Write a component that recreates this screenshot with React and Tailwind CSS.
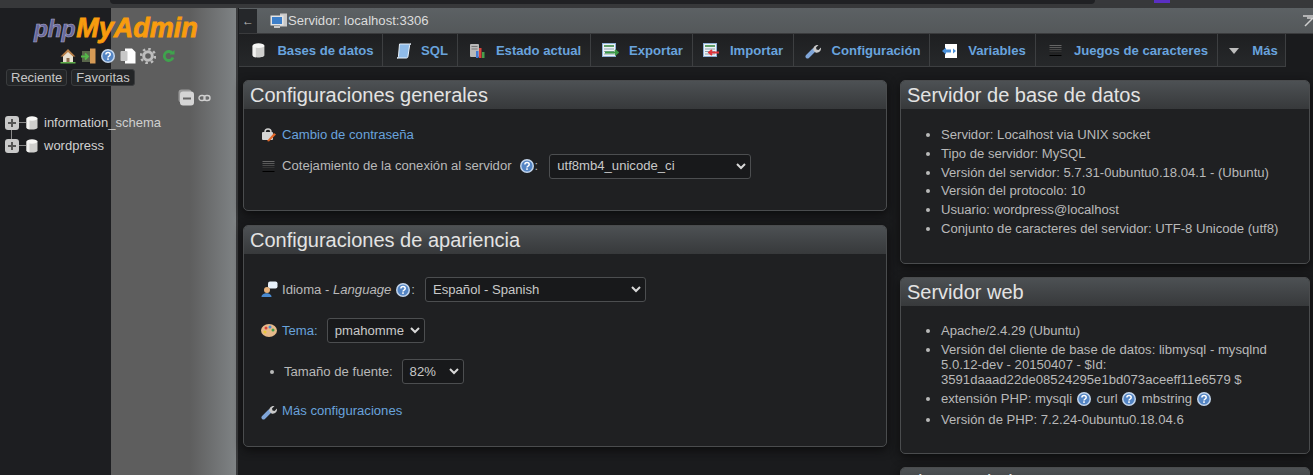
import React from "react";

const Help = ({ className = "" }) => (
  <svg width="14" height="14" viewBox="0 0 14 14" className={`inline-block shrink-0 ${className}`}>
    <circle cx="7" cy="7" r="7" fill="#c4d6ec" />
    <circle cx="7" cy="7" r="5.500" fill="#5485c4" />
    <path d="M4.900 5.600c0-2.700 4.300-2.700 4.300 0 0 1.600-2.200 1.400-2.200 2.800" fill="none" stroke="#fff" strokeWidth="1.500" />
    <rect x="6.200" y="9.300" width="1.600" height="1.600" fill="#fff" />
  </svg>
);

const Db = ({ w = 12, h = 14 }) => (
  <svg width={w} height={h} viewBox="0 0 12 14" className="shrink-0">
    <path d="M0.500 2.500v9c0 2.700 11 2.700 11 0v-9z" fill="#cfcfcd" />
    <path d="M0.500 2.500v9c0 1.200 1.500 1.800 3 2V4z" fill="#f2f2f0" />
    <ellipse cx="6" cy="2.500" rx="5.500" ry="2.200" fill="#f7f7f5" />
  </svg>
);

const Lines = () => (
  <svg width="13" height="13" viewBox="0 0 13 13" className="shrink-0">
    {[1, 3, 5, 7, 9, 11].map((y, i) => (
      <rect key={y} x="0.500" y={y} width="12" height="1" fill={["#666", "#5a5a5a", "#4a4a4a", "#333", "#222", "#000"][i]} />
    ))}
  </svg>
);

const Wrench = () => (
  <svg width="17" height="17" viewBox="0 0 17 17" className="shrink-0">
    <path d="M2.500 14.500 9 8" stroke="#7fa5d8" strokeWidth="4" strokeLinecap="round" />
    <path d="M8.500 8.500c-1-3 1.500-6 5-5.500l-2.500 2.500.5 2 2 .5 2.500-2.500c.5 3.500-2.500 6-5.500 5z" fill="#c9c9c9" />
  </svg>
);

const Sql = () => (
  <svg width="16" height="16" viewBox="0 0 16 16" className="shrink-0">
    <path d="M3.500 1H15c-1 0-1.500 1-1.500 2l-1.500 10c0 1-.5 2-1.500 2H1c1 0 1.500-1 1.500-2z" fill="#8fbbe8" stroke="#eaf3fc" strokeWidth="1" />
  </svg>
);

const Status = () => (
  <svg width="17" height="16" viewBox="0 0 17 16" className="shrink-0">
    <rect x="1" y="1" width="9" height="13" rx="1" fill="#b8b8b8" />
    <path d="M2.500 3.500h6M2.500 6h6" stroke="#777" />
    <rect x="7" y="8" width="2.500" height="7" fill="#3f78d4" />
    <rect x="10" y="5" width="2.500" height="10" fill="#d9423a" />
    <rect x="13" y="9" width="2.500" height="6" fill="#46a04a" />
  </svg>
);

const Sheet = ({ arrow }) => (
  <svg width="17" height="15" viewBox="0 0 17 15" className="shrink-0">
    <rect x="0.500" y="0.500" width="13" height="13" fill="#eef2f6" stroke="#8fb0d8" />
    <rect x="2" y="2" width="10" height="2" fill="#5f9e6a" />
    <path d="M2 6h10M2 8.500h10M2 11h10" stroke="#8aa0b0" />
    <path d={arrow === "in" ? "M16 9.500H6M9 7l-3 2.500L9 12" : "M3 9.500h13M13 7l3 2.500-3 2.500"} fill="none" stroke={arrow === "in" ? "#e2333a" : "#3c9a46"} strokeWidth="1.800" />
  </svg>
);

const Vars = () => (
  <svg width="18" height="16" viewBox="0 0 18 16" className="shrink-0">
    <rect x="4" y="1" width="12" height="14" fill="#fff" />
    <path d="M1 8l4-3.500v2h5v3H5v2z" fill="#4a90d9" />
    <path d="M15 8l-3-2.500v5z" fill="#4a90d9" />
  </svg>
);

const Arrow = () => (
  <svg width="10" height="6" viewBox="0 0 10 6" className="shrink-0">
    <path d="M0 0h10L5 6z" fill="#bdbdbd" />
  </svg>
);

const tabs = [
  { icon: <Db w={13} h={15} />, label: "Bases de datos", w: "w-[144px] pl-[5px]", gap: "gap-[12px]" },
  { icon: <Sql />, label: "SQL", w: "w-[75px] pl-[4px]", gap: "gap-[9px]" },
  { icon: <Status />, label: "Estado actual", w: "w-[133px] pl-[2px]", gap: "gap-[10px]" },
  { icon: <Sheet arrow="out" />, label: "Exportar", w: "w-[102px] pl-[2px]", gap: "gap-[10px]" },
  { icon: <Sheet arrow="in" />, label: "Importar", w: "w-[101px]", gap: "gap-[10px]" },
  { icon: <Wrench />, label: "Configuración", w: "w-[136px] pl-[2px]", gap: "gap-[10px]" },
  { icon: <Vars />, label: "Variables", w: "w-[106px] pl-[2px]", gap: "gap-[9px]" },
  { icon: <Lines />, label: "Juegos de caracteres", w: "w-[182px] pl-[4px]", gap: "gap-[12px]" },
  { icon: <Arrow />, label: "Más", w: "w-[68px] pl-[4px]", gap: "gap-[13px]" },
];

function Panel({ title, className = "", children }) {
  return (
    <section className={`shrink-0 border border-[#4a4c4e] rounded-[5px] bg-[#1f2022] shadow-[0_3px_10px_#0c0c0d] overflow-hidden ${className}`}>
      <h2 className="h-[28px] bg-gradient-to-b from-[#4d5154] to-[#37393b] pl-[6px] text-[20px] leading-[28px] text-[#e3e3e3]">{title}</h2>
      {children}
    </section>
  );
}

const Sel = ({ className, children }) => (
  <div className={`flex items-center justify-between rounded-[3px] border border-[#4c4e50] bg-[#18191b] text-[#c9c9c9] ${className}`}>
    <span>{children}</span>
    <svg width="10" height="7" viewBox="0 0 10 7">
      <path d="M1 1l4 4 4-4" fill="none" stroke="#d8d8d8" strokeWidth="2" />
    </svg>
  </div>
);

export default function App() {
  return (
    <div className="h-screen w-full overflow-hidden flex flex-col bg-[#1a1b1d] font-['Liberation_Sans',sans-serif] text-[13.12px] text-[#b9b9b9]">
      {/* browser strip */}
      <div className="h-[8px] shrink-0 bg-[#37383a] flex">
        <div className="ml-[110px] w-[985px] h-[4px] bg-[#202124] rounded-bl-[8px] rounded-br-[8px]" />
        <div className="ml-[59px] w-[16px] h-[3px] bg-[#5a2fc2]" />
      </div>

      <div className="flex flex-1 min-h-0">
        {/* sidebar */}
        <aside className="w-[236px] shrink-0 bg-[linear-gradient(to_right,#1d1e21_0,#1d1e21_111px,#5e5e5e_111px,#5e5e5e_190px,#7f8385_236px)] text-[#c6c6c6]">
          <div className="mt-[5px] ml-[34px] h-[30px] flex items-baseline font-bold italic leading-[30px]">
            <span className="text-[23px] tracking-[-0.3px] text-[#66669a] [-webkit-text-stroke:0.6px_#a8a8c8]">php</span>
            <span className="ml-[1px] text-[27px] text-[#f89c0e] [-webkit-text-stroke:0.8px_#f89c0e]">MyAdmin</span>
          </div>
          <div className="mt-[5px] ml-[60px] flex items-center gap-[4px] h-[16px]">
            <svg width="16" height="16" viewBox="0 0 16 16"><path d="M3 8v6h10V8L8 3z" fill="#e8e0d0" /><path d="M8 1 0.500 8.500h2.500L8 4l5 4.500h2.500z" fill="#b9814a" /><rect x="6.500" y="10" width="3" height="4" fill="#8a6a4a" /><rect x="0.500" y="14" width="15" height="1.500" fill="#5fae4a" /></svg>
            <svg width="16" height="16" viewBox="0 0 16 16"><rect x="10" y="0.500" width="5.500" height="15" fill="#d59a56" /><rect x="2" y="3" width="8" height="11" fill="#59664a" /><path d="M1 8.500h7M5 5.500 8 8.500l-3 3" stroke="#54b84a" strokeWidth="1.800" fill="none" /></svg>
            <Help className="ml-[1px]" />
            <svg width="16" height="16" viewBox="0 0 16 16" className="ml-[1px]"><path d="M5 0.500h7l3.500 3.500v11.500H5z" fill="#fff" /><rect x="0.500" y="3" width="7" height="10" rx="1" fill="#c8c8c8" /></svg>
            <svg width="16" height="16" viewBox="0 0 16 16"><circle cx="8" cy="8" r="4.300" fill="none" stroke="#bdbdbd" strokeWidth="3" /><circle cx="8" cy="8" r="7" fill="none" stroke="#bdbdbd" strokeWidth="2.500" strokeDasharray="2.500 3" /></svg>
            <svg width="13" height="14" viewBox="0 0 13 14" className="ml-[2px]"><path d="M10.500 4.500A4.500 4.500 0 1 0 11 8.500" fill="none" stroke="#3fa34d" strokeWidth="2.800" /><path d="M7.500 5.500h5V1z" fill="#3fa34d" /></svg>
          </div>
          <div className="mt-[5px] ml-[6px] flex gap-[4px] text-[13px] leading-[15px]">
            <span className="h-[17px] px-[4px] rounded-[3px] border border-[#3a3c3e] bg-[#232527]">Reciente</span>
            <span className="h-[17px] px-[4px] rounded-[3px] border border-[#3a3c3e] bg-[#232527]">Favoritas</span>
          </div>
          <div className="mt-[3px] ml-[178px] h-[17px] flex items-center gap-[4px]">
            <svg width="16" height="17" viewBox="0 0 16 17"><rect x="0.500" y="0.500" width="13" height="13" rx="3" fill="#9a9a9a" /><rect x="2" y="2.500" width="14" height="14" rx="3" fill="#d5d5d5" /><rect x="5" y="8.500" width="8" height="2" fill="#666" /></svg>
            <svg width="13" height="8" viewBox="0 0 13 8"><rect x="1" y="1.500" width="6" height="5" rx="2.500" fill="none" stroke="#cfcfcf" strokeWidth="1.400" /><rect x="6" y="1.500" width="6" height="5" rx="2.500" fill="none" stroke="#cfcfcf" strokeWidth="1.400" /></svg>
          </div>
          <ul className="mt-[5px] ml-[5px] relative">
            {["information_schema", "wordpress"].map((db, i) => (
              <li key={db} className="h-[23px] flex items-center relative">
                {i === 0 && <span className="absolute left-[6px] top-[14px] w-px h-[18px] bg-[#8a8a8a]" />}
                <svg width="14" height="14" viewBox="0 0 14 14" className="shrink-0 relative">
                  <rect width="14" height="14" rx="3" fill="#c9c9c9" />
                  <path d="M3 7h8M7 3v8" stroke="#555" strokeWidth="2" />
                </svg>
                <span className="w-[7px] h-px bg-[#8a8a8a] shrink-0" />
                <Db />
                <span className="ml-[6px] text-[13px] text-[#d0d0d0]">{db}</span>
              </li>
            ))}
          </ul>
        </aside>
        <div className="w-[2px] shrink-0 bg-[#3a3b3d]" />

        {/* main */}
        <main className="flex-1 min-w-0 flex flex-col">
          <div className="h-[26px] shrink-0 ml-[1px] flex items-center bg-gradient-to-b from-[#5c6164] to-[#54585a] text-[#dcdcdc] border-b border-[#3a3b3d] relative">
            <span className="w-[18px] h-[24px] bg-[#25272a] text-[#bdbdbd] flex items-center justify-center text-[12px]">←</span>
            <svg width="18" height="16" viewBox="0 0 18 16" className="ml-[13px]">
              <rect x="10" y="0.500" width="7" height="13" fill="#c9c9c9" />
              <rect x="0.500" y="2.500" width="13" height="10" fill="#e4e4e4" />
              <rect x="2" y="4" width="10" height="7" fill="#3d7fc9" />
              <rect x="4" y="13" width="6" height="2" fill="#c9c9c9" />
            </svg>
            <span>Servidor: localhost:3306</span>
            <svg width="12" height="12" viewBox="0 0 12 12" className="absolute right-[-1px] top-[7px]">
              <path d="M1 1h11M3 11l8-8M5 3h7v7" fill="none" stroke="#cfcfcf" strokeWidth="1.500" />
            </svg>
          </div>
          <nav className="h-[33px] shrink-0 ml-[1px] flex bg-[#1a1b1d]">
            {tabs.map((t) => (
              <div key={t.label} className={`${t.w} ${t.gap} shrink-0 flex items-center justify-center pt-[1px] border-r border-b border-[#3d3f41] bg-gradient-to-b from-[#1e1f21] to-[#26282a] font-bold text-[#69a3dd]`}>
                {t.icon}
                <span>{t.label}</span>
              </div>
            ))}
          </nav>

          <div className="flex-1 min-h-0 flex gap-[13px] pl-[5px] pt-[13px]">
            <div className="w-[644px] shrink-0 flex flex-col gap-[14px]">
              <Panel title="Configuraciones generales" className="h-[131px]">
                <div className="pl-[17px] pt-[17px]">
                  <div className="flex items-center gap-[5px] h-[18px]">
                    <svg width="16" height="16" viewBox="0 0 16 16" className="shrink-0"><path d="M4 5a3 3 0 0 1 6 0" fill="none" stroke="#cfcfcf" strokeWidth="1.500" /><rect x="1" y="5" width="11" height="8" rx="1" fill="#d5d5d5" /><path d="M6 14l7-8 2 1.500-7 7z" fill="#e0672a" /></svg>
                    <span className="text-[#69a3dd]">Cambio de contraseña</span>
                  </div>
                  <div className="flex items-center gap-[6px] mt-[9px] h-[26px]">
                    <span className="ml-[1px] mr-[1px] flex"><Lines /></span>
                    <span className="mr-[1px]">Cotejamiento de la conexión al servidor</span>
                    <span className="ml-[1px] flex items-center"><Help /><span className="ml-[1px]">:</span></span>
                    <Sel className="w-[202px] h-[25px] ml-[5px] pl-[7px] pr-[4px]">utf8mb4_unicode_ci</Sel>
                  </div>
                </div>
              </Panel>
              <Panel title="Configuraciones de apariencia" className="h-[222px]">
                <div className="pl-[17px] pt-[23px]">
                  <div className="flex items-center h-[25px]">
                    <svg width="17" height="17" viewBox="0 0 17 17" className="shrink-0"><rect x="7" y="0.500" width="9.500" height="7" rx="2" fill="#e8f1fa" /><circle cx="6" cy="9" r="3" fill="#e8b27c" /><path d="M0.500 16c0-5 10-5 10 0z" fill="#4a8ad0" /></svg>
                    <span className="ml-[4px]">Idioma - <em>Language</em></span>
                    <Help className="ml-[5px]" />
                    <span className="ml-[1px]">:</span>
                    <Sel className="w-[221px] h-[25px] ml-[10px] pl-[7px] pr-[4px]">Español - Spanish</Sel>
                  </div>
                  <div className="flex items-center h-[25px] mt-[16px]">
                    <svg width="16" height="15" viewBox="0 0 16 15" className="shrink-0"><ellipse cx="8" cy="7.500" rx="8" ry="6.500" fill="#e6b98a" /><circle cx="5" cy="5" r="1.500" fill="#d9423a" /><circle cx="9" cy="4" r="1.500" fill="#4a8ad0" /><circle cx="12" cy="7" r="1.500" fill="#46a04a" /><circle cx="4" cy="9" r="1.500" fill="#e8c83a" /></svg>
                    <span className="ml-[5px] text-[#69a3dd]">Tema:</span>
                    <Sel className="w-[98px] h-[25px] ml-[9px] pl-[7px] pr-[4px]">pmahomme</Sel>
                  </div>
                  <div className="flex items-center h-[25px] mt-[16px] ml-[9px]">
                    <span className="w-[4px] h-[4px] rounded-full bg-[#b9b9b9]" />
                    <span className="ml-[10px]">Tamaño de fuente:</span>
                    <Sel className="w-[62px] h-[25px] ml-[9px] pl-[7px] pr-[4px]">82%</Sel>
                  </div>
                  <div className="flex items-center gap-[4px] h-[18px] mt-[18px]">
                    <Wrench />
                    <span className="text-[#69a3dd]">Más configuraciones</span>
                  </div>
                </div>
              </Panel>
            </div>

            <div className="w-[410px] shrink-0 flex flex-col gap-[13px]">
              <Panel title="Servidor de base de datos" className="h-[184px]">
                <ul className="mt-[17px] ml-[34px] list-disc list-outside pl-[6px] pr-[4px] leading-[18.8px]">
                  <li>Servidor: Localhost via UNIX socket</li>
                  <li>Tipo de servidor: MySQL</li>
                  <li>Versión del servidor: 5.7.31-0ubuntu0.18.04.1 - (Ubuntu)</li>
                  <li>Versión del protocolo: 10</li>
                  <li>Usuario: wordpress@localhost</li>
                  <li>Conjunto de caracteres del servidor: UTF-8 Unicode (utf8)</li>
                </ul>
              </Panel>
              <Panel title="Servidor web" className="h-[177px]">
                <ul className="mt-[17px] ml-[34px] list-disc list-outside pl-[6px] pr-[4px] leading-[15px] space-y-[4px]">
                  <li>Apache/2.4.29 (Ubuntu)</li>
                  <li>Versión del cliente de base de datos: libmysql - mysqlnd 5.0.12-dev - 20150407 - $Id: 3591daaad22de08524295e1bd073aceeff11e6579 $</li>
                  <li className="pb-[2px]">
                    extensión PHP: mysqli <Help className="align-[-3px] ml-[1px] mr-[2px]" /> curl <Help className="align-[-3px] ml-[1px] mr-[2px]" /> mbstring <Help className="align-[-3px] ml-[1px] mr-[2px]" />
                  </li>
                  <li>Versión de PHP: 7.2.24-0ubuntu0.18.04.6</li>
                </ul>
              </Panel>
              <Panel title="phpMyAdmin" className="h-[60px]" />
            </div>
          </div>
        </main>
      </div>
    </div>
  );
}
